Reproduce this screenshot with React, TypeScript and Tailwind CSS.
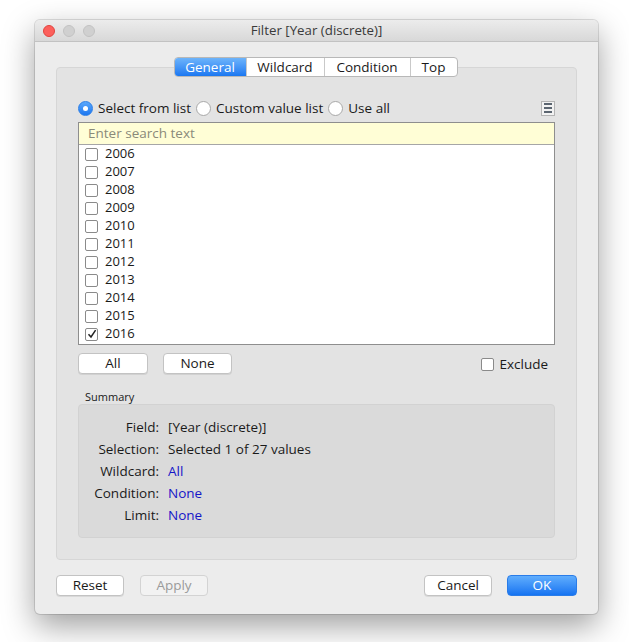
import React from "react";

const years = ["2006", "2007", "2008", "2009", "2010", "2011", "2012", "2013", "2014", "2015", "2016"];

const font = { fontFamily: '"Open Sans", "Liberation Sans", sans-serif' };

// macOS-ish checkbox
function Check({ checked }: { checked?: boolean }) {
  return (
    <span className="flex h-[13px] w-[13px] items-center justify-center rounded-[2px] border border-[#8a8a8a] bg-white">
      {checked && (
        <svg width="10" height="10" viewBox="0 0 10 10">
          <path d="M1.5 5.2 L4 8 L8.6 1.2" fill="none" stroke="#222" strokeWidth="1.5" />
        </svg>
      )}
    </span>
  );
}

function Radio({ on, label }: { on?: boolean; label: string }) {
  return (
    <div className="flex items-center gap-[5px]">
      {on ? (
        <span className="flex h-[15px] w-[15px] items-center justify-center rounded-full bg-gradient-to-b from-[#5aa8fb] to-[#1a76f0] border border-[#2a7ee8]">
          <span className="h-[5px] w-[5px] rounded-full bg-white" />
        </span>
      ) : (
        <span className="h-[15px] w-[15px] rounded-full border border-[#a8a8a8] bg-white" />
      )}
      <span className="text-[13.5px] text-[#1a1a1a]">{label}</span>
    </div>
  );
}

function Btn({ label, w, kind }: { label: string; w: string; kind?: "disabled" | "primary" }) {
  if (kind === "primary") {
    return (
      <button className={`${w} block h-[21px] rounded-[4px] border border-[#2a7ce8] bg-gradient-to-b from-[#5fadfd] to-[#1473f1] text-[13.5px] leading-[19px] text-white`}>
        {label}
      </button>
    );
  }
  if (kind === "disabled") {
    return (
      <button className={`${w} block h-[21px] rounded-[4px] border border-[#d3d3d3] bg-[#f2f2f2] text-[13.5px] leading-[19px] text-[#9a9a9a]`}>
        {label}
      </button>
    );
  }
  return (
    <button className={`${w} block h-[21px] rounded-[4px] border border-[#c3c3c3] bg-white text-[13.5px] leading-[19px] text-[#1a1a1a] shadow-[0_1px_0_rgba(0,0,0,0.08)]`}>
      {label}
    </button>
  );
}

function Tabs() {
  const tabs = [
    { label: "General", w: "w-[71px]" },
    { label: "Wildcard", w: "w-[78px]" },
    { label: "Condition", w: "w-[86px]" },
    { label: "Top", w: "w-[47px]" },
  ];
  return (
    <div className="relative z-10 mx-auto flex h-[20px] w-fit translate-x-[-1px] overflow-hidden rounded-[4px] border border-[#b8b8b8] bg-white">
      {tabs.map((t, i) =>
        i === 0 ? (
          <div key={t.label} className={`${t.w} flex items-center justify-center bg-gradient-to-b from-[#6db4fb] to-[#1977f1] text-[13.5px] text-white`}>
            {t.label}
          </div>
        ) : (
          <div key={t.label} className={`${t.w} flex items-center justify-center border-l border-[#c9c9c9] text-[13.5px] text-[#1a1a1a]`}>
            {t.label}
          </div>
        )
      )}
    </div>
  );
}

function SummaryRow({ label, value, link }: { label: string; value: string; link?: boolean }) {
  return (
    <div className="flex h-[22px] items-center text-[13.5px]">
      <span className="w-[80px] text-right text-[#1a1a1a]">{label}</span>
      <span className={`ml-[9px] ${link ? "text-[#1515c8]" : "text-[#1a1a1a]"}`}>{value}</span>
    </div>
  );
}

export default function App() {
  return (
    <div className="h-[642px] w-[629px] bg-white pl-[35px] pt-[20px]" style={font}>
      <div className="flex h-[594px] w-[563px] flex-col overflow-hidden rounded-[5px] bg-[#ececec] shadow-[0_12px_32px_rgba(0,0,0,0.38),0_0_0_1px_rgba(0,0,0,0.12)]">
        {/* title bar */}
        <div className="relative flex h-[22px] items-center justify-center border-b border-[#c2c2c2] bg-gradient-to-b from-[#ececec] to-[#d8d8d8]">
          <div className="absolute left-[8px] top-[5px] flex gap-[8px]">
            <span className="h-[12px] w-[12px] rounded-full border border-[#e0443e] bg-[#fc605c]" />
            <span className="h-[12px] w-[12px] rounded-full border border-[#c2c2c2] bg-[#d0d0d0]" />
            <span className="h-[12px] w-[12px] rounded-full border border-[#c2c2c2] bg-[#d0d0d0]" />
          </div>
          <span className="text-[13.3px] text-[#3a3a3a]">Filter [Year (discrete)]</span>
        </div>

        {/* body */}
        <div className="flex flex-1 flex-col px-[21px] pt-[15px]">
          <Tabs />
          <div className="-mt-[10px] h-[493px] rounded-[4px] border border-[#d6d6d6] bg-[#e3e3e3] px-[21px] pt-[32px]">
            {/* radio row */}
            <div className="flex h-[16px] items-center">
              <div className="flex items-center gap-[5px]">
                <Radio on label="Select from list" />
                <Radio label="Custom value list" />
                <Radio label="Use all" />
              </div>
              <div className="ml-auto flex h-[15px] w-[14px] flex-col items-center justify-center gap-[2px] border border-[#b4b4b4] bg-[#f2f2f2]">
                <span className="h-[2px] w-[8px] bg-[#5b6570]" />
                <span className="h-[2px] w-[8px] bg-[#5b6570]" />
                <span className="h-[2px] w-[8px] bg-[#5b6570]" />
              </div>
            </div>

            {/* search + list */}
            <div className="mt-[6px] border border-[#8e8e8e] bg-white">
              <div className="flex h-[22px] items-center border-b border-[#a6a6a6] bg-[#fffed6] px-[9px] text-[13.5px] text-[#8a8a7a]">
                Enter search text
              </div>
              <div className="h-[199px]">
                {years.map((y) => (
                  <div key={y} className="flex h-[18px] items-center gap-[7px] pl-[6px] text-[13px] text-[#1a1a1a]">
                    <Check checked={y === "2016"} />
                    <span>{y}</span>
                  </div>
                ))}
              </div>
            </div>

            {/* all/none/exclude */}
            <div className="mt-[8px] flex h-[20px] items-center">
              <Btn label="All" w="w-[70px]" />
              <div className="ml-[15px] flex">
                <Btn label="None" w="w-[69px]" />
              </div>
              <div className="ml-auto mr-[7px] mt-[2px] flex items-center gap-[5px]">
                <Check />
                <span className="text-[13.5px] text-[#1a1a1a]">Exclude</span>
              </div>
            </div>

            {/* summary */}
            <div className="mt-[17px] pl-[7px] text-[11px] leading-[13px] text-[#1a1a1a]">Summary</div>
            <div className="mt-[1px] h-[134px] rounded-[4px] border border-[#d2d2d2] bg-[#dadada] pt-[11px]">
              <SummaryRow label="Field:" value="[Year (discrete)]" />
              <SummaryRow label="Selection:" value="Selected 1 of 27 values" />
              <SummaryRow label="Wildcard:" value="All" link />
              <SummaryRow label="Condition:" value="None" link />
              <SummaryRow label="Limit:" value="None" link />
            </div>
          </div>

          {/* footer */}
          <div className="mt-[15px] flex h-[21px] items-center">
            <Btn label="Reset" w="w-[68px]" />
            <div className="ml-[16px] flex">
              <Btn label="Apply" w="w-[68px]" kind="disabled" />
            </div>
            <div className="ml-auto flex items-center gap-[15px]">
              <Btn label="Cancel" w="w-[68px]" />
              <Btn label="OK" w="w-[70px]" kind="primary" />
            </div>
          </div>
        </div>
      </div>
    </div>
  );
}
